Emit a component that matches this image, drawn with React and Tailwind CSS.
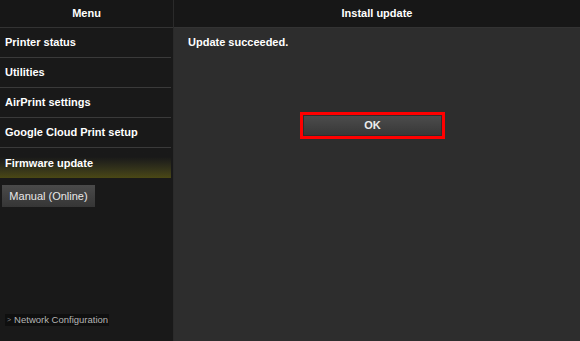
import React from "react";

const MENU = [
  "Printer status",
  "Utilities",
  "AirPrint settings",
  "Google Cloud Print setup",
];

const App = () => {
  return (
    <div
      className="flex h-[341px] w-[580px] overflow-hidden bg-[#2d2d2d] text-white"
      style={{ fontFamily: '"Liberation Sans", Arial, sans-serif' }}
    >
      {/* Sidebar */}
      <div className="flex w-[174px] flex-col border-r border-[#2a2a2a] bg-[#191919]">
        <div className="flex h-[28px] items-center justify-center border-b border-[#333] bg-[#171717] text-[11px] font-bold">
          Menu
        </div>
        <div className="flex flex-1 flex-col pr-[2px]">
          {MENU.map((item) => (
            <div
              key={item}
              className="flex h-[30px] items-center border-b border-[#3a3a3a] pl-[5px] text-[11px] font-bold"
            >
              {item}
            </div>
          ))}
          <div className="flex h-[30px] items-center bg-gradient-to-b from-[#191919] from-30% to-[#4a4814] pl-[5px] text-[11px] font-bold">
            Firmware update
          </div>
          <div className="pl-[2px] pt-[5px]">
            <button className="h-[22px] w-[93px] bg-gradient-to-b from-[#4a4a4a] to-[#363636] text-[11px] text-[#e8e8e8]">
              Manual (Online)
            </button>
          </div>
          <div className="mt-auto mb-[12px] pl-[5px]">
            <div className="inline-flex items-center gap-[3px] bg-[#0f0f0f] pl-[2px] pr-[1px] text-[9.5px] leading-[12px] text-[#b5b5b5]">
              <span className="text-[7px] text-[#888]">&gt;</span>
              Network Configuration
            </div>
          </div>
        </div>
      </div>

      {/* Content */}
      <div className="flex flex-1 flex-col">
        <div className="flex h-[28px] items-center justify-center border-b border-[#333] bg-[#171717] text-[11px] font-bold">
          Install update
        </div>
        <div className="flex flex-col pl-[14px] pt-[6px]">
          <div className="text-[11px] font-bold">Update succeeded.</div>
          <div className="mt-[61px] ml-[112px] h-[27px] w-[145px] border-[3px] border-[#ff0000] p-[1px]">
            <button className="flex h-full w-full items-center justify-center bg-gradient-to-b from-[#4c4c4c] to-[#383838] text-[11px] font-bold text-[#eee]">
              OK
            </button>
          </div>
        </div>
      </div>
    </div>
  );
};

export default App;
